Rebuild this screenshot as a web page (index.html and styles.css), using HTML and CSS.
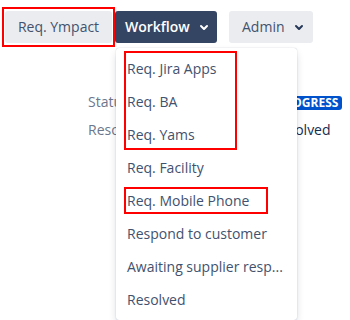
FILE: index.html
```html
<!DOCTYPE html>
<html>
<head>
<meta charset="utf-8">
<link rel="stylesheet" href="styles.css">
</head>
<body>
<div class="page">
  <div class="toolbar">
    <button class="btn btn-default btn-first">Req. Ympact</button>
    <div class="dd">
      <button class="btn btn-primary">Workflow
        <svg class="chev" width="24" height="24" viewBox="0 0 24 24"><path fill="currentColor" d="M8.292 10.293a1.009 1.009 0 000 1.419l2.939 2.965c.218.215.5.322.779.322s.556-.107.769-.322l2.93-2.955a1.01 1.01 0 000-1.419.987.987 0 00-1.406 0l-2.298 2.317-2.307-2.327a.99.99 0 00-1.406 0z"/></svg>
      </button>
      <div class="menu">
        <div class="item">Req. Jira Apps</div>
        <div class="item">Req. BA</div>
        <div class="item">Req. Yams</div>
        <div class="item">Req. Facility</div>
        <div class="item">Req. Mobile Phone</div>
        <div class="item">Respond to customer</div>
        <div class="item">Awaiting supplier resp...</div>
        <div class="item">Resolved</div>
      </div>
    </div>
    <button class="btn btn-default btn-admin">Admin
      <svg class="chev chev-dark" width="24" height="24" viewBox="0 0 24 24"><path fill="currentColor" d="M8.292 10.293a1.009 1.009 0 000 1.419l2.939 2.965c.218.215.5.322.779.322s.556-.107.769-.322l2.93-2.955a1.01 1.01 0 000-1.419.987.987 0 00-1.406 0l-2.298 2.317-2.307-2.327a.99.99 0 00-1.406 0z"/></svg>
    </button>
  </div>
  <div class="details">
    <span class="label">Status</span><span class="value"><span class="lozenge">In progress</span></span>
    <span class="label">Resolution</span><span class="value">Resolved</span>
  </div>
  <div class="mark mark1"></div>
  <div class="mark mark2"></div>
  <div class="mark mark3"></div>
</div>
</body>
</html>
```

FILE: styles.css
```css
html, body {
  margin: 0;
  padding: 0;
  background: #ffffff;
}
.page {
  position: relative;
  width: 350px;
  height: 320px;
  overflow: hidden;
  font-family: "Open Sans", "Noto Sans", sans-serif;
  font-size: 14px;
  color: #42526e;
}
.toolbar {
  display: flex;
  align-items: flex-start;
  padding: 11px 0 0 5px;
}
.btn {
  display: inline-flex;
  align-items: center;
  height: 32px;
  border: 0;
  border-radius: 3px;
  font-family: inherit;
  font-size: 14px;
  line-height: 20px;
  padding: 0 12px;
  margin: 0;
  cursor: pointer;
}
.btn-default {
  background: #ebecf0;
  color: #42526e;
}
.btn-first {
  width: 107px;
  justify-content: center;
}
.dd {
  position: relative;
  margin-left: 3px;
}
.btn-primary {
  background: #344563;
  color: #ffffff;
  font-weight: 600;
  padding: 0 1px 0 10px;
  width: 102px;
}
.btn-admin {
  margin-left: 12px;
  padding: 0 2px 0 13px;
  width: 84px;
}
.chev {
  flex: none;
  margin-left: auto;
  display: block;
}
.chev-dark {
  color: #253858;
}
.menu {
  position: absolute;
  top: 37px;
  left: 1px;
  width: 181px;
  padding: 4px 0;
  background: #ffffff;
  border-radius: 3px;
  box-shadow: 0 4px 8px -2px rgba(9, 30, 66, 0.25), 0 0 1px rgba(9, 30, 66, 0.31);
  z-index: 2;
}
.item {
  height: 33px;
  line-height: 33px;
  padding: 0 11px;
  color: #42526e;
  white-space: nowrap;
}
.details {
  display: grid;
  grid-template-columns: 184px auto;
  grid-auto-rows: 28px;
  align-items: center;
  margin-top: 45px;
  padding-left: 88px;
  line-height: 20px;
}
.label {
  color: #6b778c;
}
.value {
  color: #172b4d;
  white-space: nowrap;
}
.lozenge {
  display: inline-block;
  background: #0052cc;
  color: #ffffff;
  font-weight: 700;
  font-size: 12px;
  line-height: 14px;
  text-transform: uppercase;
  padding: 0 4px;
  margin-left: -16px;
  border-radius: 3px;
  vertical-align: middle;
}
.mark {
  position: absolute;
  border: 2px solid #ff0000;
  box-sizing: border-box;
  z-index: 3;
}
.mark1 { left: 2px; top: 7px; width: 113px; height: 40px; }
.mark2 { left: 124px; top: 51px; width: 113px; height: 99px; }
.mark3 { left: 124px; top: 187px; width: 144px; height: 27px; }
```
